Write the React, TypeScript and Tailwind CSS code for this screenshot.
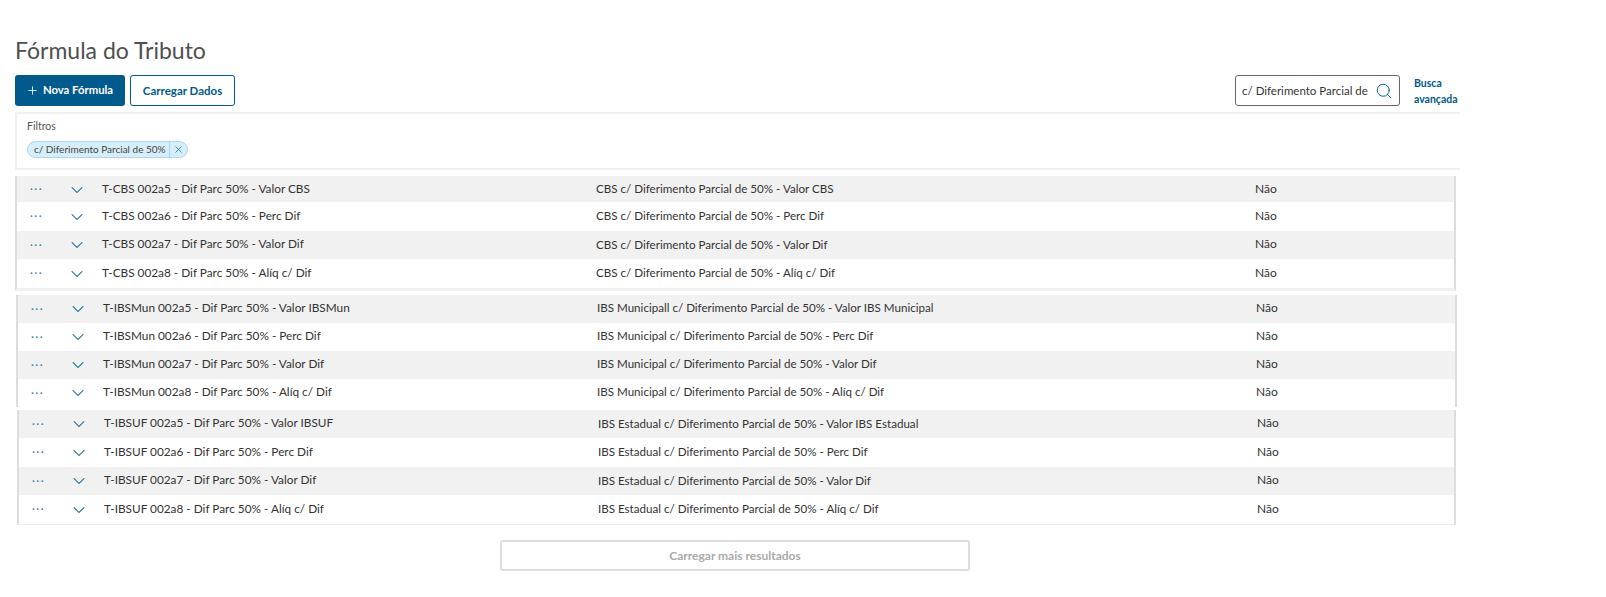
import { ChevronDown, Plus, Search, X } from 'lucide-react';

const GROUPS = [
  {
    offset: 'ml-[15px] w-[1441px]',
    gap: 'mt-[6px]',
    end: 'border-b-[3px] border-[#f1f1f1]',
    rowHeight: 'h-[28.5px] first:h-[26px]',
    rows: [
      ['T-CBS 002a5 - Dif Parc 50% - Valor CBS', 'CBS c/ Diferimento Parcial de 50% - Valor CBS'],
      ['T-CBS 002a6 - Dif Parc 50% - Perc Dif', 'CBS c/ Diferimento Parcial de 50% - Perc Dif'],
      ['T-CBS 002a7 - Dif Parc 50% - Valor Dif', 'CBS c/ Diferimento Parcial de 50% - Valor Dif'],
      ['T-CBS 002a8 - Dif Parc 50% - Alíq c/ Dif', 'CBS c/ Diferimento Parcial de 50% - Alíq c/ Dif'],
    ],
  },
  {
    offset: 'ml-[16px] w-[1441px]',
    gap: 'mt-[4px]',
    end: '',
    rowHeight: 'h-[28px]',
    rows: [
      ['T-IBSMun 002a5 - Dif Parc 50% - Valor IBSMun', 'IBS Municipall c/ Diferimento Parcial de 50% - Valor IBS Municipal'],
      ['T-IBSMun 002a6 - Dif Parc 50% - Perc Dif', 'IBS Municipal c/ Diferimento Parcial de 50% - Perc Dif'],
      ['T-IBSMun 002a7 - Dif Parc 50% - Valor Dif', 'IBS Municipal c/ Diferimento Parcial de 50% - Valor Dif'],
      ['T-IBSMun 002a8 - Dif Parc 50% - Alíq c/ Dif', 'IBS Municipal c/ Diferimento Parcial de 50% - Alíq c/ Dif'],
    ],
  },
  {
    offset: 'ml-[17px] w-[1439px]',
    gap: 'mt-[3px]',
    end: 'border-b border-[#eeeeee]',
    rowHeight: 'h-[28.5px]',
    rows: [
      ['T-IBSUF 002a5 - Dif Parc 50% - Valor IBSUF', 'IBS Estadual c/ Diferimento Parcial de 50% - Valor IBS Estadual'],
      ['T-IBSUF 002a6 - Dif Parc 50% - Perc Dif', 'IBS Estadual c/ Diferimento Parcial de 50% - Perc Dif'],
      ['T-IBSUF 002a7 - Dif Parc 50% - Valor Dif', 'IBS Estadual c/ Diferimento Parcial de 50% - Valor Dif'],
      ['T-IBSUF 002a8 - Dif Parc 50% - Alíq c/ Dif', 'IBS Estadual c/ Diferimento Parcial de 50% - Alíq c/ Dif'],
    ],
  },
];

export default function App() {
  return (
    <div className="h-[597px] w-[1606px] overflow-hidden bg-white font-['Lato',sans-serif] text-[12px] text-[#333333]">
      <h1 className="ml-[15px] pt-[34px] text-[23px] leading-[32px] text-[#505050]">Fórmula do Tributo</h1>

      {/* toolbar */}
      <div className="mt-[9px] flex h-[31px] w-[1460px] items-center pl-[15px]">
        <button className="flex h-[31px] w-[110px] items-center justify-center gap-[4px] rounded-[3px] bg-[#005a8c] pr-[1px] text-[11.3px] font-bold text-white">
          <Plus size={13} strokeWidth={1.5} />
          Nova Fórmula
        </button>
        <button className="ml-[5px] h-[31px] w-[105px] rounded-[3px] border border-[#005a8c] text-[11.5px] font-bold text-[#005a8c]">
          Carregar Dados
        </button>
        <div className="ml-auto flex h-[31px] w-[165px] items-center justify-between rounded-[3px] border border-[#666666] pl-[6px] pr-[6px]">
          <span className="whitespace-nowrap text-[11.5px]">c/ Diferimento Parcial de</span>
          <Search size={18} strokeWidth={1.25} className="shrink-0 text-[#005a8c]" />
        </div>
        <a className="ml-[14px] w-[46px] text-[10.5px] font-bold leading-[16px] text-[#005a8c]">Busca avançada</a>
      </div>

      {/* filtros */}
      <div className="ml-[15px] mt-[6px] h-[58px] w-[1445px] border-y-2 border-l-2 border-[#f1f1f1] pl-[10px] pt-[4px]">
        <div className="text-[10.5px] leading-[16px] text-[#555555]">Filtros</div>
        <div className="mt-[7px] flex h-[17px] w-[161px] items-center rounded-full border border-[#a9d8ee] bg-[#d6eefa] pl-[6px] text-[10px] text-[#444444]">
          <span className="whitespace-nowrap">c/ Diferimento Parcial de 50%</span>
          <span className="ml-auto flex h-full w-[18px] items-center justify-center border-l border-[#a9d8ee] text-[#005a8c]">
            <X size={11} strokeWidth={1.5} />
          </span>
        </div>
      </div>

      {/* listas */}
      {GROUPS.map((group, g) => (
        <div key={g} className={`${group.offset} ${group.gap} ${group.end} border-x-2 border-l-[#dddddd] border-r-[#dddddd]`}>
          {group.rows.map((row, i) => (
            <div key={i} className={`flex items-center pb-[1px] ${group.rowHeight} ${i % 2 === 0 ? 'bg-[#f1f1f1]' : 'bg-white'}`}>
              <span className="ml-[13px] w-[37px] text-[11px] leading-none tracking-[1.5px] text-[#2f7fa8]">···</span>
              <ChevronDown size={20} strokeWidth={1.25} className="mt-[2px] text-[#005a8c]" />
              <span className="ml-[15px] w-[494px] whitespace-nowrap text-[11.8px]">{row[0]}</span>
              <span className="w-[659px] whitespace-nowrap text-[11.6px]">{row[1]}</span>
              <span>Não</span>
            </div>
          ))}
        </div>
      ))}

      <div className="mt-[15px] flex">
        <button className="ml-[500px] h-[31px] w-[470px] rounded-[3px] border-2 border-[#dddddd] pt-[1px] text-[12px] font-bold text-[#aaaaaa]">
          Carregar mais resultados
        </button>
      </div>
    </div>
  );
}
